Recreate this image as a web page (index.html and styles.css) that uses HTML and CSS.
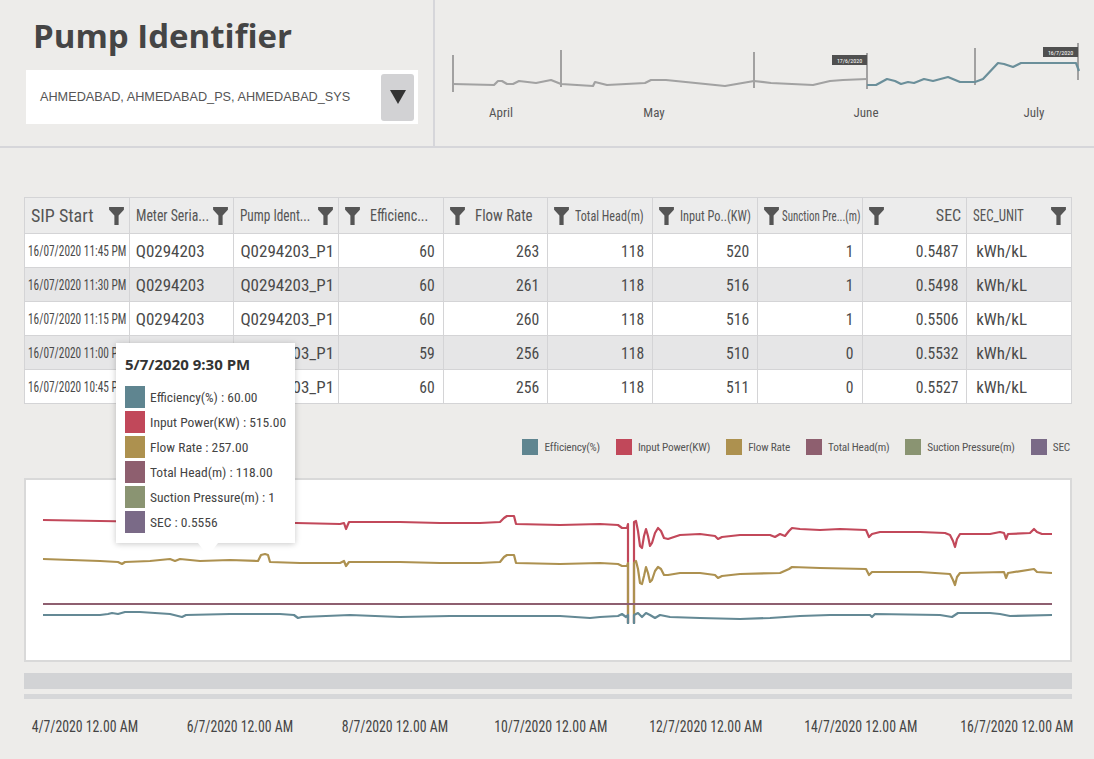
FILE: index.html
```html
<!DOCTYPE html>
<html>
<head>
<meta charset="utf-8">
<link rel="stylesheet" href="styles.css">
</head>
<body>
<div class="page">
  <header class="top">
    <div class="top-left">
      <h1 class="title">Pump Identifier</h1>
      <div class="dropdown">
        <span class="dropdown-text">AHMEDABAD, AHMEDABAD_PS, AHMEDABAD_SYS</span>
        <span class="dropdown-btn"><svg width="16" height="14" viewBox="0 0 16 14"><path d="M0 0H16L8 14Z" fill="#333"/></svg></span>
      </div>
    </div>
    <div class="top-right">
      <svg class="timeline" width="659" height="146" viewBox="435 0 659 146">
        <g stroke="#8f8f8f" stroke-width="1.6">
          <line x1="453" y1="55" x2="453" y2="92"/>
          <line x1="561" y1="50" x2="561" y2="87"/>
          <line x1="754" y1="52" x2="754" y2="88"/>
          <line x1="867" y1="53" x2="867" y2="89"/>
          <line x1="975" y1="48" x2="975" y2="85"/>
          <line x1="1078" y1="43" x2="1078" y2="80"/>
        </g>
        <path d="M453,84 L494,85 L498,81 L502,81 L507,84 L513,84 L519,81 L536,83 L551,80 L561,84 L593,86 L595,82 L607,85 L645,83 L651,80 L666,80 L725,86 L754,81 L771,83 L813,85 L830,81 L843,80 L867,79" fill="none" stroke="#a2a2a2" stroke-width="2.2" stroke-linejoin="round"/>
        <path d="M867,85 L876,85 L887,79 L895,81 L901,84 L908,82 L914,83 L924,79 L933,81 L948,77 L960,82 L975,82 L983,79 L998,63 L1004,64 L1013,67 L1021,63 L1027,63 L1076,63 L1079,71" fill="none" stroke="#6b8f9a" stroke-width="2.2" stroke-linejoin="round"/>
        <rect x="832" y="55" width="35" height="10" fill="#505050"/>
        <text x="849.5" y="62.5" class="tag-text" text-anchor="middle">17/6/2020</text>
        <rect x="1043" y="47" width="35" height="10" fill="#505050"/>
        <text x="1060.5" y="54.5" class="tag-text" text-anchor="middle">16/7/2020</text>
        <text x="501" y="117" class="month" text-anchor="middle">April</text>
        <text x="654" y="117" class="month" text-anchor="middle">May</text>
        <text x="866" y="117" class="month" text-anchor="middle">June</text>
        <text x="1034" y="117" class="month" text-anchor="middle">July</text>
      </svg>
    </div>
  </header>

  <section class="table-wrap">
    <table class="grid">
      <thead>
        <tr>
          <th><div class="hc"><span class="ht big">SIP Start</span><svg class="fi push" viewBox="0 0 14 17"><path d="M0 0H14V2.6L9 8V17H5V8L0 2.6Z"/></svg></div></th>
          <th><div class="hc"><span class="ht s86">Meter Seria...</span><svg class="fi push" viewBox="0 0 14 17"><path d="M0 0H14V2.6L9 8V17H5V8L0 2.6Z"/></svg></div></th>
          <th><div class="hc"><span class="ht s83">Pump Ident...</span><svg class="fi push" viewBox="0 0 14 17"><path d="M0 0H14V2.6L9 8V17H5V8L0 2.6Z"/></svg></div></th>
          <th><div class="hc g10"><svg class="fi" viewBox="0 0 14 17"><path d="M0 0H14V2.6L9 8V17H5V8L0 2.6Z"/></svg><span class="ht s88">Efficienc...</span></div></th>
          <th><div class="hc g10"><svg class="fi" viewBox="0 0 14 17"><path d="M0 0H14V2.6L9 8V17H5V8L0 2.6Z"/></svg><span class="ht s93">Flow Rate</span></div></th>
          <th><div class="hc g6"><svg class="fi" viewBox="0 0 14 17"><path d="M0 0H14V2.6L9 8V17H5V8L0 2.6Z"/></svg><span class="ht sm s81">Total Head(m)</span></div></th>
          <th><div class="hc g6"><svg class="fi" viewBox="0 0 14 17"><path d="M0 0H14V2.6L9 8V17H5V8L0 2.6Z"/></svg><span class="ht sm s82">Input Po..(KW)</span></div></th>
          <th><div class="hc g3"><svg class="fi" viewBox="0 0 14 17"><path d="M0 0H14V2.6L9 8V17H5V8L0 2.6Z"/></svg><span class="ht xs s78">Sunction Pre...(m)</span></div></th>
          <th><div class="hc"><svg class="fi" viewBox="0 0 14 17"><path d="M0 0H14V2.6L9 8V17H5V8L0 2.6Z"/></svg><span class="ht rt push">SEC</span></div></th>
          <th><div class="hc"><span class="ht s81">SEC_UNIT</span><svg class="fi push" viewBox="0 0 14 17"><path d="M0 0H14V2.6L9 8V17H5V8L0 2.6Z"/></svg></div></th>
        </tr>
      </thead>
      <tbody>
        <tr><td class="date"><span class="cx">16/07/2020 11:45 PM</span></td><td class="txt">Q0294203</td><td class="txt">Q0294203_P1</td><td class="num"><span class="cx">60</span></td><td class="num"><span class="cx">263</span></td><td class="num"><span class="cx">118</span></td><td class="num"><span class="cx">520</span></td><td class="num"><span class="cx">1</span></td><td class="num"><span class="cx">0.5487</span></td><td class="unit">kWh/kL</td></tr>
        <tr><td class="date"><span class="cx">16/07/2020 11:30 PM</span></td><td class="txt">Q0294203</td><td class="txt">Q0294203_P1</td><td class="num"><span class="cx">60</span></td><td class="num"><span class="cx">261</span></td><td class="num"><span class="cx">118</span></td><td class="num"><span class="cx">516</span></td><td class="num"><span class="cx">1</span></td><td class="num"><span class="cx">0.5498</span></td><td class="unit">kWh/kL</td></tr>
        <tr><td class="date"><span class="cx">16/07/2020 11:15 PM</span></td><td class="txt">Q0294203</td><td class="txt">Q0294203_P1</td><td class="num"><span class="cx">60</span></td><td class="num"><span class="cx">260</span></td><td class="num"><span class="cx">118</span></td><td class="num"><span class="cx">516</span></td><td class="num"><span class="cx">1</span></td><td class="num"><span class="cx">0.5506</span></td><td class="unit">kWh/kL</td></tr>
        <tr><td class="date"><span class="cx">16/07/2020 11:00 PM</span></td><td class="txt">Q0294203</td><td class="txt">Q0294203_P1</td><td class="num"><span class="cx">59</span></td><td class="num"><span class="cx">256</span></td><td class="num"><span class="cx">118</span></td><td class="num"><span class="cx">510</span></td><td class="num"><span class="cx">0</span></td><td class="num"><span class="cx">0.5532</span></td><td class="unit">kWh/kL</td></tr>
        <tr><td class="date"><span class="cx">16/07/2020 10:45 PM</span></td><td class="txt">Q0294203</td><td class="txt">Q0294203_P1</td><td class="num"><span class="cx">60</span></td><td class="num"><span class="cx">256</span></td><td class="num"><span class="cx">118</span></td><td class="num"><span class="cx">511</span></td><td class="num"><span class="cx">0</span></td><td class="num"><span class="cx">0.5527</span></td><td class="unit">kWh/kL</td></tr>
      </tbody>
    </table>
  </section>

  <div class="legend">
    <span class="li"><i class="sw c-eff"></i>Efficiency(%)</span>
    <span class="li"><i class="sw c-pow"></i>Input Power(KW)</span>
    <span class="li"><i class="sw c-flow"></i>Flow Rate</span>
    <span class="li"><i class="sw c-head"></i>Total Head(m)</span>
    <span class="li"><i class="sw c-suc"></i>Suction Pressure(m)</span>
    <span class="li"><i class="sw c-sec"></i>SEC</span>
  </div>

  <section class="chart">
    <svg class="plot" width="1044" height="180" viewBox="26 479 1044 180">
      <g fill="none" stroke-width="2.2" stroke-linejoin="round">
        <path stroke="#c2485a" d="M43,519 L100,520 L160,521 L250,521 L296,522 L340,523 L344,522 L346,528 L349,521 L400,521 L440,522 L480,522 L500,521 L504,517 L507,515 L514,515 L516,523 L560,524 L600,523 L618,524 L622,527 L627,527 L628,523 L628,622 M634,622 L634,521 L636,520 L638,530 L640,545 L642,547 L644,535 L646,528 L648,535 L650,545 L652,542 L655,532 L658,527 L661,530 L664,537 L668,538 L680,534 L700,533 L715,535 L718,538 L722,536 L740,534 L770,534 L775,536 L780,533 L785,535 L789,530 L792,527 L800,528 L820,529 L840,528 L866,529 L869,536 L872,533 L880,531 L920,531 L945,532 L950,534 L953,540 L955,546 L957,538 L960,533 L990,533 L1000,531 L1004,532 L1006,538 L1008,533 L1030,532 L1034,528 L1037,531 L1042,533 L1052,533"/>
        <path stroke="#ad9150" d="M43,558 L100,560 L118,561 L122,563 L125,561 L150,560 L170,558 L175,560 L180,558 L200,560 L230,559 L258,560 L261,554 L265,553 L268,554 L270,561 L300,562 L340,562 L344,560 L346,565 L349,561 L400,561 L440,562 L480,562 L500,561 L504,556 L507,554 L514,554 L516,562 L560,563 L600,562 L618,563 L622,565 L627,565 L628,562 L628,622 M634,622 L634,562 L636,560 L638,568 L640,582 L642,583 L644,575 L646,566 L648,572 L650,581 L652,579 L655,570 L658,566 L661,568 L664,574 L668,574 L680,572 L700,572 L715,574 L718,577 L722,575 L740,573 L780,572 L789,568 L792,566 L820,567 L866,568 L869,574 L872,571 L920,571 L950,573 L953,579 L955,584 L957,576 L960,572 L1004,571 L1006,577 L1008,572 L1034,568 L1037,571 L1052,572"/>
        <path stroke="#8e5f70" d="M43,603 L1052,603"/>
        <path stroke="#648995" d="M43,614 L100,614 L108,613 L112,612 L118,613 L125,611 L140,611 L170,613 L178,615 L182,616 L186,614 L230,613 L280,613 L294,614 L298,617 L302,616 L350,614 L400,616 L450,615 L520,615 L560,615 L590,617 L600,616 L618,615 L622,613 L626,616 L628,614 L628,623 M634,623 L634,614 L638,612 L642,616 L646,612 L650,614 L655,617 L660,614 L670,616 L700,617 L740,618 L770,617 L800,615 L830,614 L870,614 L872,616 L875,613 L940,614 L952,616 L958,612 L990,612 L1000,613 L1010,615 L1052,614"/>
      </g>
    </svg>
  </section>

  <div class="scroll-band"></div>
  <div class="scroll-line"></div>

  <div class="axis">
    <span class="ax">4/7/2020 12.00 AM</span>
    <span class="ax">6/7/2020 12.00 AM</span>
    <span class="ax">8/7/2020 12.00 AM</span>
    <span class="ax">10/7/2020 12.00 AM</span>
    <span class="ax">12/7/2020 12.00 AM</span>
    <span class="ax">14/7/2020 12.00 AM</span>
    <span class="ax">16/7/2020 12.00 AM</span>
  </div>

  <div class="tooltip">
    <div class="tt-title">5/7/2020 9:30 PM</div>
    <div class="tt-row"><i class="tt-sw c-eff"></i>Efficiency(%) : 60.00</div>
    <div class="tt-row"><i class="tt-sw c-pow"></i>Input Power(KW) : 515.00</div>
    <div class="tt-row"><i class="tt-sw c-flow"></i>Flow Rate : 257.00</div>
    <div class="tt-row"><i class="tt-sw c-head"></i>Total Head(m) : 118.00</div>
    <div class="tt-row"><i class="tt-sw c-suc"></i>Suction Pressure(m) : 1</div>
    <div class="tt-row"><i class="tt-sw c-sec"></i>SEC : 0.5556</div>
  </div>
</div>
</body>
</html>
```

FILE: styles.css
```css
* { box-sizing: border-box; }
html, body { margin: 0; padding: 0; }
body {
  background: #edecea;
  font-family: "Roboto Condensed", "DejaVu Sans Condensed", "Liberation Sans", sans-serif;
  color: #4d4d4d;
}
.page {
  position: relative;
  width: 1094px;
  height: 759px;
  overflow: hidden;
}
.top {
  display: flex;
  height: 148px;
  border-bottom: 2px solid #d6d6da;
}
.top-left {
  width: 435px;
  border-right: 2px solid #d6d6da;
  padding: 14px 0 0 26px;
}
.title {
  margin: 0 0 12px 7px;
  font-family: "Open Sans", "DejaVu Sans", sans-serif;
  font-weight: 700;
  font-size: 33px;
  line-height: 44px;
  color: #454545;
}
.dropdown {
  width: 392px;
  height: 54px;
  background: #fff;
  display: flex;
  align-items: center;
  justify-content: space-between;
  padding: 0 4px 0 14px;
}
.dropdown-text {
  font-family: "Liberation Sans", Arial, sans-serif;
  font-size: 12.7px;
  color: #555;
}
.dropdown-btn {
  width: 33px;
  height: 47px;
  background: #d2d2d4;
  border-radius: 3px;
  display: flex;
  align-items: center;
  justify-content: center;
}
.top-right { flex: 1; }
.timeline { display: block; }
.tag-text { font-size: 6px; fill: #fff; }
.month { font-size: 13px; fill: #555; }

.table-wrap { padding: 49px 22px 0 24px; }
.grid {
  width: 1048px;
  table-layout: fixed;
  border-collapse: collapse;
  font-size: 17px;
  color: #4a4a4a;
}
.grid th, .grid td {
  border: 1px solid #d4d4d6;
  padding: 0;
  white-space: nowrap;
  overflow: hidden;
}
.grid th {
  height: 35px;
  background: #ececec;
  font-weight: 400;
  text-align: left;
}
.grid td { height: 34px; }
.grid tbody tr:nth-child(odd) td { background: #fff; }
.grid tbody tr:nth-child(even) td { background: #e6e6e7; }

.hc {
  display: flex;
  align-items: center;
  padding: 0 5px 0 6px;
  height: 35px;
}
.hc.g10 { gap: 10px; }
.hc.g6 { gap: 6px; }
.hc.g3 { gap: 3px; }
.push { margin-left: auto; }
.ht {
  display: inline-block;
  flex: 0 1 auto;
  min-width: 0;
  white-space: nowrap;
  font-size: 16px;
  color: #555;
  transform-origin: left center;
}
.ht.rt { transform-origin: right center; }
.ht.big { font-size: 18px; }
.ht.sm { font-size: 15px; }
.ht.xs { font-size: 14px; }
.s93 { transform: scaleX(0.93); }
.s88 { transform: scaleX(0.88); }
.s86 { transform: scaleX(0.86); }
.s83 { transform: scaleX(0.83); }
.s82 { transform: scaleX(0.82); }
.s81 { transform: scaleX(0.81); }
.s78 { transform: scaleX(0.78); }
.fi { width: 15px; height: 18px; flex: none; fill: #555; }

.cx {
  display: inline-block;
  transform: scaleX(0.92);
  transform-origin: right center;
}
.date { font-size: 14px; padding-left: 3px !important; }
.date .cx { transform: scaleX(0.81); transform-origin: left center; }
.txt { padding-left: 6px !important; }
.num { text-align: right; padding-right: 8px !important; }
.unit { padding-left: 9px !important; }

.legend {
  display: flex;
  justify-content: flex-end;
  gap: 16px;
  padding: 0 24px 0 0;
  margin-top: 34px;
  height: 18px;
  align-items: center;
  font-size: 11.3px;
  letter-spacing: -0.2px;
  color: #555;
}
.li { display: flex; align-items: center; gap: 6px; }
.sw { display: block; width: 16px; height: 16px; }
.c-eff { background: #5f8590; }
.c-pow { background: #c1485a; }
.c-flow { background: #ad914f; }
.c-head { background: #8e5f6f; }
.c-suc { background: #8a9472; }
.c-sec { background: #7a6a87; }

.chart {
  margin: 22px 22px 0 24px;
  height: 184px;
  background: #fff;
  border: 2px solid #d9d9d9;
}
.plot { display: block; }
.scroll-band {
  margin: 11px 22px 0 24px;
  height: 16px;
  background: #d2d3d5;
}
.scroll-line {
  margin: 5px 22px 0 24px;
  height: 5px;
  background: #d6d7d9;
}
.axis {
  display: grid;
  grid-template-columns: repeat(7, 155.3px);
  padding-left: 7px;
  margin-top: 18px;
  font-size: 16px;
  color: #444;
  text-align: center;
}
.ax {
  display: inline-block;
  justify-self: center;
  white-space: nowrap;
  transform: scaleX(0.86);
  transform-origin: center center;
}

.tooltip {
  position: absolute;
  left: 116px;
  top: 343px;
  width: 179px;
  height: 200px;
  background: #fff;
  box-shadow: 0 1px 6px rgba(0,0,0,0.22);
  padding: 11px 0 0 9px;
  font-size: 13.5px;
  color: #444;
  white-space: nowrap;
}
.tooltip::after {
  content: "";
  position: absolute;
  left: 82px;
  bottom: -13px;
  border-left: 10px solid transparent;
  border-right: 10px solid transparent;
  border-top: 13px solid #fff;
}
.tt-title {
  font-family: "Open Sans", "DejaVu Sans", sans-serif;
  font-weight: 700;
  font-size: 15px;
  line-height: 20px;
  margin-bottom: 10px;
  color: #333;
}
.tt-row {
  display: flex;
  align-items: center;
  gap: 5px;
  height: 25px;
}
.tt-sw { display: block; width: 20px; height: 22px; flex: none; }
```
